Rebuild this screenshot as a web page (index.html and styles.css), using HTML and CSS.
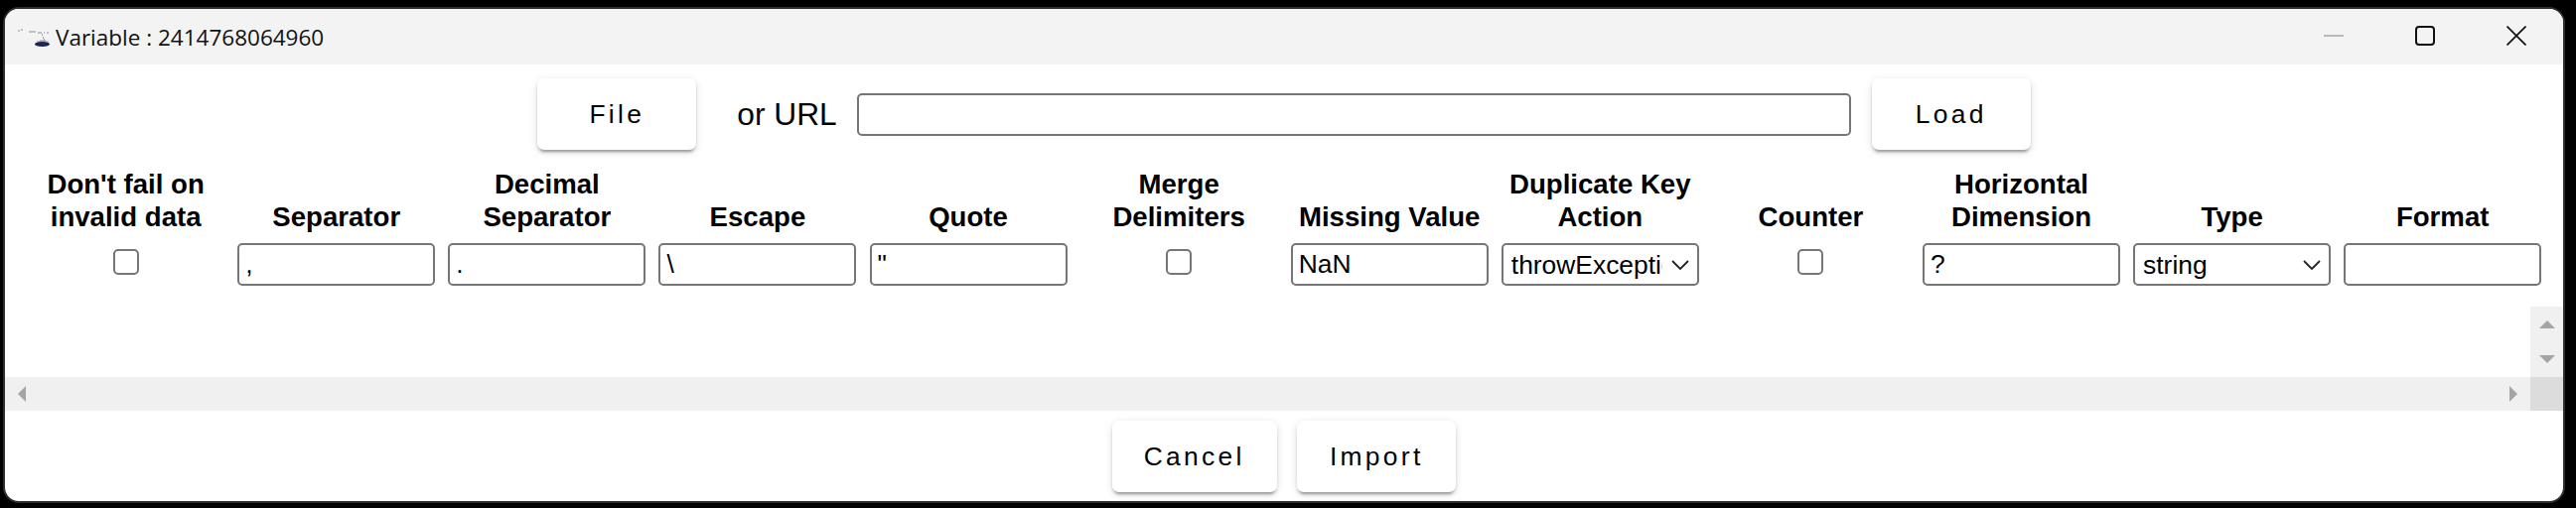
FILE: index.html
```html
<!DOCTYPE html>
<html lang="en">
<head>
    <meta charset="UTF-8">
    <title>Variable : 2414768064960</title>
    <link rel="stylesheet" href="styles.css">
</head>
<body>
    <div class="window">
        <div class="titlebar">
            <svg class="app-icon" width="32" height="20" viewBox="0 0 32 20">
                <path d="M0 3h2M3 2h2M11 4h7M20 5h4M26 5h1M29 5h2" stroke="#8d8f9c" stroke-width="1" fill="none"/>
                <path d="M24 7h1M25 10h1M26 12h1" stroke="#4b4f6e" stroke-width="1" fill="none"/>
                <path d="M22 13h6M19 14h12" stroke="#8d8f9c" stroke-width="1" fill="none"/>
                <ellipse cx="24.5" cy="16.5" rx="7.5" ry="2.4" fill="#1c2454"/>
            </svg>
            <span class="title">Variable : 2414768064960</span>
            <div class="win-buttons">
                <div class="win-btn">
                    <svg width="20" height="20" viewBox="0 0 20 20"><path d="M0 10h20" stroke="#b9b9b9" stroke-width="2"/></svg>
                </div>
                <div class="win-btn">
                    <svg width="20" height="20" viewBox="0 0 20 20"><rect x="1" y="1" width="18" height="18" rx="3" fill="none" stroke="#111" stroke-width="2"/></svg>
                </div>
                <div class="win-btn">
                    <svg width="20" height="20" viewBox="0 0 20 20"><path d="M0.5 0.5L19.5 19.5M19.5 0.5L0.5 19.5" stroke="#111" stroke-width="1.7"/></svg>
                </div>
            </div>
        </div>

        <div class="source-row">
            <button class="btn">File</button>
            <span class="or-url">or URL</span>
            <input type="text" class="field url-field">
            <button class="btn">Load</button>
        </div>

        <div class="options">
            <div class="opt-label">Don't fail on invalid data</div>
            <div class="opt-label">Separator</div>
            <div class="opt-label">Decimal Separator</div>
            <div class="opt-label">Escape</div>
            <div class="opt-label">Quote</div>
            <div class="opt-label">Merge Delimiters</div>
            <div class="opt-label">Missing Value</div>
            <div class="opt-label">Duplicate Key Action</div>
            <div class="opt-label">Counter</div>
            <div class="opt-label">Horizontal Dimension</div>
            <div class="opt-label">Type</div>
            <div class="opt-label">Format</div>

            <div class="opt-cell"><input type="checkbox" class="check"></div>
            <div class="opt-cell"><input type="text" class="field" value=","></div>
            <div class="opt-cell"><input type="text" class="field" value="."></div>
            <div class="opt-cell"><input type="text" class="field" value="\"></div>
            <div class="opt-cell"><input type="text" class="field" value="&quot;"></div>
            <div class="opt-cell"><input type="checkbox" class="check"></div>
            <div class="opt-cell"><input type="text" class="field" value="NaN"></div>
            <div class="opt-cell">
                <select class="field pick">
                    <option>throwException</option>
                    <option>skip</option>
                </select>
            </div>
            <div class="opt-cell"><input type="checkbox" class="check"></div>
            <div class="opt-cell"><input type="text" class="field" value="?"></div>
            <div class="opt-cell">
                <select class="field pick">
                    <option>string</option>
                    <option>number</option>
                </select>
            </div>
            <div class="opt-cell"><input type="text" class="field"></div>
        </div>

        <div class="vbar">
            <svg width="16" height="8" viewBox="0 0 16 8"><polygon points="8,0 16,8 0,8"/></svg>
            <svg width="16" height="8" viewBox="0 0 16 8"><polygon points="0,0 16,0 8,8"/></svg>
        </div>
        <div class="hbar">
            <svg class="arrow-left" width="8" height="16" viewBox="0 0 8 16"><polygon points="8,0 8,16 0,8"/></svg>
            <svg class="arrow-right" width="8" height="16" viewBox="0 0 8 16"><polygon points="0,0 8,8 0,16"/></svg>
            <div class="corner"></div>
        </div>

        <div class="actions">
            <button class="btn">Cancel</button>
            <button class="btn">Import</button>
        </div>
    </div>
</body>
</html>
```

FILE: styles.css
```css
html, body { margin: 0; height: 100%; background: #000; overflow: hidden; }
body { font-family: "Liberation Sans", Arial, sans-serif; font-size: 26.4px; color: #000; padding-top: 7px; box-sizing: border-box; }

.window { width: 2576px; height: 496px; margin-left: 3px; background: #fff; border: 2px solid #2e2e2e; border-radius: 16px; overflow: hidden; display: flex; flex-direction: column; }

.titlebar { height: 56px; flex: none; background: #f3f3f3; display: flex; align-items: center; padding-left: 13px; }
.app-icon { margin-top: 2px; flex: none; }
.title { font-family: "Open Sans", sans-serif; font-size: 22.5px; color: #111; margin-left: 6px; }
.win-buttons { margin-left: auto; display: flex; margin-right: 1px; }
.win-btn { width: 92px; display: flex; justify-content: center; align-items: center; margin-top: -2px; }

.source-row { display: flex; justify-content: center; align-items: center; margin-top: 14px; height: 72px; gap: 20.5px; flex: none; }
.or-url { font-size: 31.7px; margin-left: 20.5px; }

.btn { font-family: "Liberation Sans", Arial, sans-serif; font-size: 26.4px; letter-spacing: 3.3px; color: #000; background: #fff; border: 0; border-radius: 7px; height: 72px; min-width: 160px; padding: 0 32px; box-shadow: 0 5px 2px -3px rgba(0,0,0,.2), 0 3px 3px 0 rgba(0,0,0,.14), 0 2px 8px 0 rgba(0,0,0,.12); }

.options { display: grid; grid-template-columns: repeat(12, 212.1px); grid-template-rows: 66px 43px; row-gap: 10px; margin: 18px 0 0 15.6px; flex: none; }
.opt-label { align-self: end; text-align: center; font-size: 27.6px; font-weight: bold; line-height: 33px; padding: 0 6px; }
.opt-cell { display: flex; justify-content: center; align-items: flex-start; }

.field { box-sizing: border-box; width: 199px; height: 43px; border: 2px solid #767676; border-radius: 5px; font-family: "Liberation Sans", Arial, sans-serif; font-size: 26.4px; padding: 0 6px; background: #fff; color: #000; margin: 0; outline: none; }
.url-field { width: 1001px; flex: none; }
.pick { appearance: none; padding: 0 35px 0 8px; background-image: url("data:image/svg+xml,%3Csvg xmlns='http://www.w3.org/2000/svg' width='18' height='10' viewBox='0 0 18 10'%3E%3Cpath d='M1 1l8 8 8-8' fill='none' stroke='%23222' stroke-width='1.8'/%3E%3C/svg%3E"); background-repeat: no-repeat; background-position: right 8px center; }
.check { appearance: none; box-sizing: border-box; width: 26px; height: 26px; margin: 6px 0 0; border: 2px solid #767676; border-radius: 5px; background: #fff; }

.vbar { width: 33px; height: 71px; flex: none; align-self: flex-end; margin-top: 21px; background: #f0f0f0; display: flex; flex-direction: column; align-items: center; justify-content: space-between; padding: 14px 0; box-sizing: border-box; }
.vbar polygon, .hbar polygon { fill: #a5a5a5; }

.hbar { height: 34px; flex: none; background: #f0f0f0; display: flex; align-items: center; padding-left: 13px; }
.arrow-right { margin-left: auto; margin-right: 13px; }
.corner { width: 33px; height: 34px; background: #dcdcdc; }

.actions { display: flex; justify-content: center; gap: 20.5px; margin-top: 10px; flex: none; }
```
